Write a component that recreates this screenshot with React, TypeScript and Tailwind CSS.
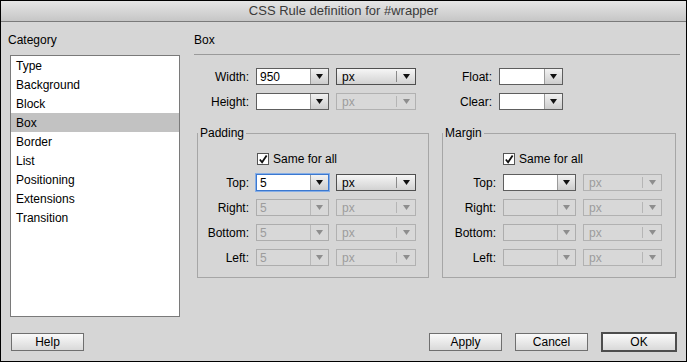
import React from "react";

const Arrow = ({ color }: { color: string }) => (
  <svg width="7" height="5" viewBox="0 0 7 5">
    <path d="M0 0H7L3.5 5Z" fill={color} />
  </svg>
);

const Combo = ({
  w,
  value = "",
  disabled = false,
  focused = false,
}: {
  w: string;
  value?: string;
  disabled?: boolean;
  focused?: boolean;
}) => (
  <div
    className={
      "flex h-[17px] border " +
      w +
      " " +
      (disabled
        ? "border-[#adadad]"
        : focused
        ? "border-[#3b78d0] ring-1 ring-[#86aee6]"
        : "border-[#5e5e5e]")
    }
  >
    <div
      className={
        "flex flex-1 items-center pl-[3px] text-[12px] leading-none " +
        (disabled ? "bg-[#d8d8d8] text-[#9c9c9c]" : "bg-white text-black")
      }
    >
      {value}
    </div>
    <div
      className={
        "flex w-[18px] items-center justify-center border-l " +
        (disabled
          ? "border-[#b8b8b8] bg-[#d8d8d8]"
          : "border-[#9a9a9a] bg-gradient-to-b from-[#f2f2f2] to-[#cdcdcd]")
      }
    >
      <Arrow color={disabled ? "#8e8e8e" : "#111"} />
    </div>
  </div>
);

const Select = ({ w, disabled = false }: { w: string; disabled?: boolean }) => (
  <div
    className={
      "flex h-[17px] items-center border " +
      w +
      " " +
      (disabled
        ? "border-[#b1b1b1] bg-[#d8d8d8] text-[#9c9c9c]"
        : "border-[#4f4f4f] bg-gradient-to-b from-[#f6f6f6] to-[#d2d2d2] text-black")
    }
  >
    <span className="pl-[5px] text-[12px] leading-none">px</span>
    <div
      className={
        "ml-auto h-[11px] w-px " + (disabled ? "bg-[#b5b5b5]" : "bg-[#8a8a8a]")
      }
    />
    <div className="flex w-[18px] items-center justify-center">
      <Arrow color={disabled ? "#8e8e8e" : "#111"} />
    </div>
  </div>
);

const Check = () => (
  <div className="flex h-[12px] w-[12px] items-center justify-center border border-[#555] bg-white">
    <svg width="11" height="11" viewBox="0 0 11 11">
      <path
        d="M2 5.5 L4.5 8.5 L9.5 1"
        fill="none"
        stroke="#111"
        strokeWidth="2"
        strokeLinejoin="miter"
      />
    </svg>
  </div>
);

const Btn = ({ label, def = false, w }: { label: string; def?: boolean; w: string }) => (
  <div
    className={
      "flex items-center justify-center bg-gradient-to-b from-[#fafafa] to-[#d9d9d9] text-[12px] text-black " +
      w +
      " " +
      (def ? "h-[20px] border-2 border-[#4d4d4d]" : "h-[18px] border border-[#6f6f6f]")
    }
  >
    {label}
  </div>
);

const Row = ({
  label,
  labelW,
  children,
  className = "",
}: {
  label: string;
  labelW: string;
  children: React.ReactNode;
  className?: string;
}) => (
  <div className={"flex h-[17px] items-center gap-[7px] " + className}>
    <div className={"text-right text-[12px] text-black " + labelW}>{label}</div>
    {children}
  </div>
);

const categories = [
  "Type",
  "Background",
  "Block",
  "Box",
  "Border",
  "List",
  "Positioning",
  "Extensions",
  "Transition",
];

export default function App() {
  return (
    <div className="flex h-[362px] w-[687px] flex-col border border-black bg-[#d6d6d6] font-['Liberation_Sans',Arial,sans-serif] text-[12px] text-black">
      <div className="flex h-[21px] items-center justify-center border-b border-[#7a7a7a] bg-gradient-to-b from-[#e6e6e6] to-[#c6c6c6] text-[13px] text-[#3a3a3a]">
        CSS Rule definition for #wrapper
      </div>
      <div className="flex pt-[11px]">
        <div className="w-[193px] pl-[7px]">
          <div className="h-[15px] leading-[15px]">Category</div>
          <div className="ml-[2px] mt-[7px] h-[262px] w-[170px] border border-[#7a7a7a] bg-white">
            {categories.map((c) => (
              <div
                key={c}
                className={
                  "flex h-[19px] items-center pl-[5px] " +
                  (c === "Box" ? "bg-[#c2c2c2]" : "")
                }
              >
                {c}
              </div>
            ))}
          </div>
        </div>
        <div className="flex-1">
          <div className="h-[15px] leading-[15px]">Box</div>
          <div className="mt-[6px] h-px w-[486px] bg-[#9a9a9a]" />
          <Row label="Width:" labelW="w-[55px]" className="mt-[13px]">
            <Combo w="w-[73px]" value="950" />
            <Select w="w-[80px]" />
            <div className="w-[69px] text-right">Float:</div>
            <Combo w="w-[64px]" />
          </Row>
          <Row label="Height:" labelW="w-[55px]" className="mt-[8px]">
            <Combo w="w-[73px]" />
            <Select w="w-[80px]" disabled />
            <div className="w-[69px] text-right">Clear:</div>
            <Combo w="w-[64px]" />
          </Row>
          <div className="ml-[3px] mt-[16px] flex gap-[13px]">
            <fieldset className="w-[232px] border border-[#a6a6a6] pb-[11px]">
              <legend className="px-[2px] leading-[14px]">Padding</legend>
              <div className="mt-[12px] flex h-[14px] items-center pl-[59px]">
                <Check />
                <span className="ml-[4px]">Same for all</span>
              </div>
              <Row label="Top:" labelW="w-[51px]" className="mt-[8px]">
                <Combo w="w-[73px]" value="5" focused />
                <Select w="w-[80px]" />
              </Row>
              <Row label="Right:" labelW="w-[51px]" className="mt-[8px]">
                <Combo w="w-[73px]" value="5" disabled />
                <Select w="w-[80px]" disabled />
              </Row>
              <Row label="Bottom:" labelW="w-[51px]" className="mt-[8px]">
                <Combo w="w-[73px]" value="5" disabled />
                <Select w="w-[80px]" disabled />
              </Row>
              <Row label="Left:" labelW="w-[51px]" className="mt-[8px]">
                <Combo w="w-[73px]" value="5" disabled />
                <Select w="w-[80px]" disabled />
              </Row>
            </fieldset>
            <fieldset className="w-[234px] border border-[#a6a6a6] pb-[11px]">
              <legend className="px-[2px] leading-[14px]">Margin</legend>
              <div className="mt-[12px] flex h-[14px] items-center pl-[60px]">
                <Check />
                <span className="ml-[4px]">Same for all</span>
              </div>
              <Row label="Top:" labelW="w-[53px]" className="mt-[8px]">
                <Combo w="w-[73px]" />
                <Select w="w-[79px]" disabled />
              </Row>
              <Row label="Right:" labelW="w-[53px]" className="mt-[8px]">
                <Combo w="w-[73px]" disabled />
                <Select w="w-[79px]" disabled />
              </Row>
              <Row label="Bottom:" labelW="w-[53px]" className="mt-[8px]">
                <Combo w="w-[73px]" disabled />
                <Select w="w-[79px]" disabled />
              </Row>
              <Row label="Left:" labelW="w-[53px]" className="mt-[8px]">
                <Combo w="w-[73px]" disabled />
                <Select w="w-[79px]" disabled />
              </Row>
            </fieldset>
          </div>
        </div>
      </div>
      <div className="mt-[15px] flex items-center pl-[10px] pr-[9px]">
        <Btn label="Help" w="w-[73px]" />
        <div className="ml-auto flex items-center gap-[13px]">
          <Btn label="Apply" w="w-[73px]" />
          <Btn label="Cancel" w="w-[73px]" />
          <Btn label="OK" w="w-[76px]" def />
        </div>
      </div>
    </div>
  );
}
